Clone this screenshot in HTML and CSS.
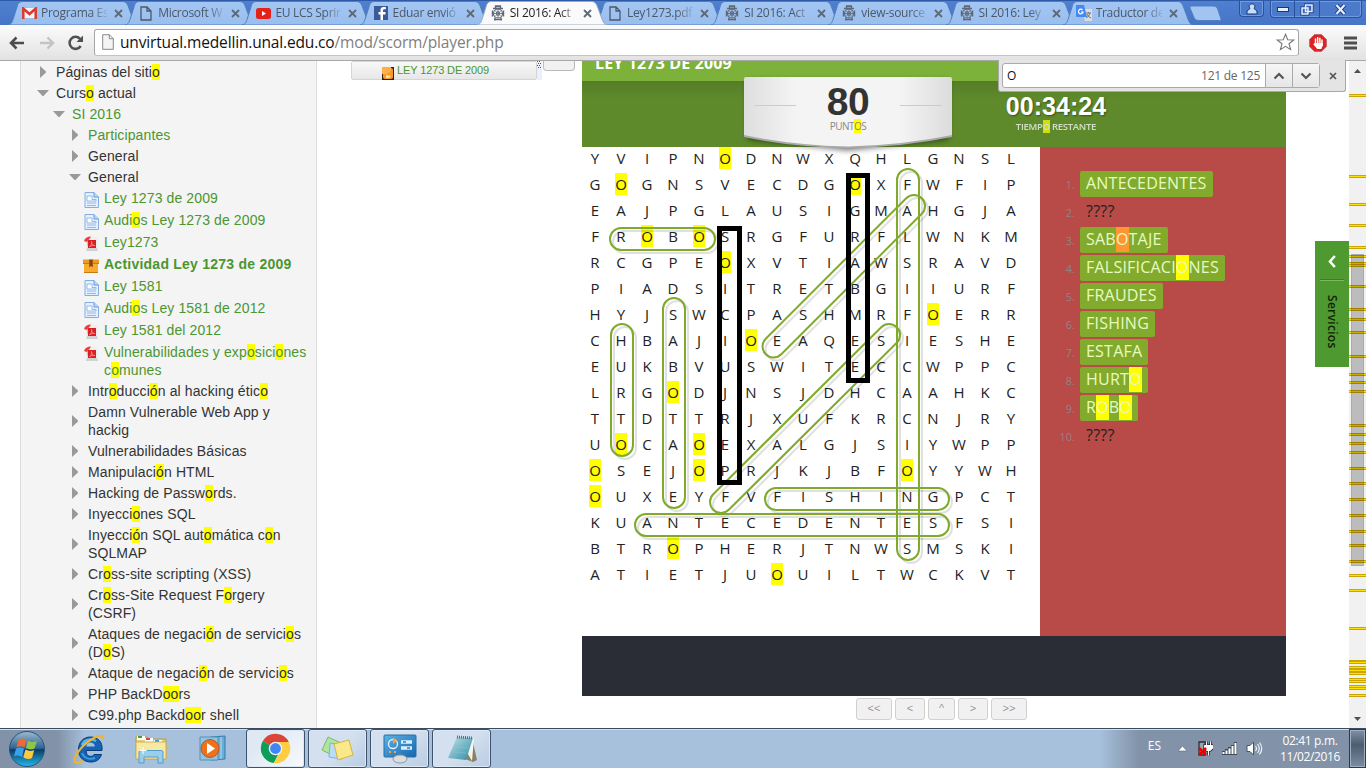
FILE: index.html
```html
<!DOCTYPE html>
<html lang="es">
<head>
<meta charset="utf-8">
<title>SI 2016: Actividad Ley 1273 de 2009</title>
<link rel="stylesheet" href="styles.css">
</head>
<body>
<svg class="defs" width="0" height="0">
  <defs>
    <linearGradient id="tabg" x1="0" y1="0" x2="0" y2="1"><stop offset="0" stop-color="#a3c6f3"/><stop offset="1" stop-color="#99beef"/></linearGradient>
    <linearGradient id="orb" x1="0" y1="0" x2="0" y2="1"><stop offset="0" stop-color="#9db9cf"/><stop offset=".48" stop-color="#2d6590"/><stop offset=".52" stop-color="#0b3a66"/><stop offset="1" stop-color="#25b8ea"/></linearGradient>
    <linearGradient id="paper" x1="0" y1="0" x2="1" y2="0"><stop offset="0" stop-color="#dedede"/><stop offset=".25" stop-color="#f4f4f4"/><stop offset=".75" stop-color="#f4f4f4"/><stop offset="1" stop-color="#dcdcdc"/></linearGradient>
    <linearGradient id="pad" x1="0" y1="0" x2="1" y2="1"><stop offset="0" stop-color="#bfe3ea"/><stop offset="1" stop-color="#2f8ba3"/></linearGradient>
    <linearGradient id="panel" x1="0" y1="0" x2="1" y2="1"><stop offset="0" stop-color="#5db2e6"/><stop offset="1" stop-color="#1767ad"/></linearGradient>
    <filter id="soft" x="-20%" y="-30%" width="140%" height="180%"><feGaussianBlur stdDeviation="3"/></filter>
    <symbol id="tabshape" viewBox="0 0 134 24"><path d="M0 24C4 23 4 21 5.500 17L9 6C10 2 11.500.5 15 .5H114C117.500.5 119 2 120.500 6L125 18C126.500 22 127.500 24 131 24Z"/></symbol>
    <symbol id="file" viewBox="0 0 12 15"><path d="M1 1h6l4 4v9H1zM7 1v4h4" fill="none" stroke="currentColor" stroke-width="1.300"/></symbol>
    <symbol id="crest" viewBox="0 0 14 16"><g fill="none" stroke="#5f6876"><path d="M4.500 3V1h5v2M4 1.500h6" stroke-width="1.300"/><path d="M2 3.500h10M1.500 5.500v6M12.500 5.500v6M3 14.500h8M4 12.500v3M10 12.500v3" stroke-width="1.400"/><circle cx="7" cy="8.500" r="4.500" stroke-width="1.200"/><circle cx="7" cy="8.500" r="1.800"/><path d="M7 4v9M2.500 8.500h9M4 5.500l6 6M10 5.500l-6 6" stroke-width=".8"/></g></symbol>
    <symbol id="page" viewBox="0 0 15 16"><path d="M1 .5h9l4.500 4.500v10.500H1z" fill="#e2f0ff" stroke="#86ace0"/><path d="M10 .5V5h4.500" fill="#b9d5f8" stroke="#6d98d8"/><path d="M3 4h5v3.500h4v1.500H3zM3 11h9M3 13.500h9" fill="#fff" stroke="#8bb2e4" stroke-width=".9"/></symbol>
    <symbol id="pdf" viewBox="0 0 15 16"><path d="M2 1h10l2 2v12H2z" fill="#eee"/><path d="M2 15h12l-1-3H3z" fill="#d2d2d2"/><path d="M3.500 4h8.500v8H4z" fill="#d92125"/><path d="M0 5C1 2 3 .5 7 .5L5.500 3 2.500 6z" fill="#e9403b"/><path d="M5.500 10.500c2.500-1.500 2.500-4 2-5 0 2.500 1.500 4 3.500 4-2 0-3.500 0-5.500 1" fill="none" stroke="#f4a5a5" stroke-width=".7"/></symbol>
    <symbol id="box" viewBox="0 0 16 14"><path d="M0 .5h16V5H0z" fill="#e99a2b"/><path d="M1 5h14v8.500H1z" fill="#f8ac2d"/><path d="M0 4.500h16M1 13.500h14" stroke="#c97a13"/><path d="M6 .5h4v8l-2-1.500-2 1.500z" fill="#a85a11"/><path d="M8 1v6" stroke="#5b3212"/></symbol>
    <symbol id="rt" viewBox="0 0 6 12"><path d="M0 0l6 5.500v1L0 12z" fill="#999"/></symbol>
    <symbol id="dn" viewBox="0 0 12 6"><path d="M0 0h12L6.500 6h-1z" fill="#999"/></symbol>
    <pattern id="dots" width="2" height="4" patternUnits="userSpaceOnUse"><path d="M0 0h1v1H0zM1 2h1v1H1z" fill="#556"/></pattern>
  </defs>
</svg>

<header class="tabstrip">
  <div id="tabs" class="tabs"></div>
  <svg class="newtab" width="33" height="17" viewBox="0 0 33 17"><path d="M3 1h21c3 0 4 1 5 4l3 9c0 1 0 1.500-1.500 1.500H10c-3 0-4-1-5-3L1 3C.7 1.500 1.500 1 3 1z" fill="#a2c4f2" stroke="#527fbd"/></svg>
  <div class="winctl">
    <span class="wc user"><svg width="12" height="12" viewBox="0 0 12 12"><path d="M4 5.500C2 2 4 1 6 1s4 1 2 4.500l3 2.500v3H1V8z" fill="#c9ddfa" stroke="#173779"/></svg></span>
    <span class="wgroup">
      <span class="wc w1"><svg width="12" height="5" viewBox="0 0 12 5"><rect x=".5" y=".5" width="11" height="4" fill="#e5effe" stroke="#173779"/></svg></span>
      <span class="wc w2"><svg width="14" height="13" viewBox="0 0 14 13"><g fill="none" stroke="#173779" stroke-width="3"><path d="M5.500 2h6.500v6.500H5.500zM2 5h6v6H2z"/></g><g fill="#3b65b5" stroke="#e5effe" stroke-width="1.500"><path d="M5.500 2h6.500v6.500H5.500zM2 5h6v6H2z"/></g></svg></span>
      <span class="wc w3"><svg width="13" height="11" viewBox="0 0 13 11"><path d="M2.500 1l8 9M10.500 1l-8 9" stroke="#173779" stroke-width="4"/><path d="M2.500 1l8 9M10.500 1l-8 9" stroke="#e5effe" stroke-width="2.200"/></svg></span>
    </span>
  </div>
</header>

<div class="toolbar">
  <svg class="back" width="16" height="14" viewBox="0 0 16 14"><path d="M1.500 7H15M7.500 1.500L2 7l5.500 5.500" fill="none" stroke="#4c4c4c" stroke-width="2.600"/></svg>
  <svg class="fwd" width="16" height="14" viewBox="0 0 16 14"><path d="M1 7h13.500M8.500 1.500L14 7l-5.500 5.500" fill="none" stroke="#c3c3c3" stroke-width="2.400"/></svg>
  <svg class="reload" width="16" height="16" viewBox="0 0 16 16"><path d="M12.700 11A6 6 0 1 1 12 3.800" fill="none" stroke="#505050" stroke-width="2.500"/><path d="M15 .5V7H8.500z" fill="#505050"/></svg>
  <div class="omnibox">
    <svg class="ofile" width="12" height="16" viewBox="0 0 12 16"><path d="M.7.7h6.600l4 4v10.600H.7zM7.300.7v4h4" fill="#f4f4f4" stroke="#888"/></svg>
    <span class="url">unvirtual.medellin.unal.edu.co<i>/mod/scorm/player.php</i></span>
    <svg class="star" width="19" height="18" viewBox="0 0 19 18"><path d="M9.500 1.300l2.200 5.400 6 .3-4.700 3.700 1.600 5.900-5.100-3.300-5.100 3.300L6 10.700 1.300 7l6-.3z" fill="#fff" stroke="#777" stroke-width="1.100"/></svg>
  </div>
  <svg class="adblock" width="18" height="18" viewBox="0 0 18 18"><path d="M5.500.5h7l5 5v7l-5 5h-7l-5-5v-7z" fill="#dd2323" stroke="#bc6060" stroke-width=".7"/><path d="M6.500 11V5M8.700 10V3.800M10.900 10V4.300M13 11V6" stroke="#fff" stroke-width="1.500" stroke-linecap="round"/><path d="M5.800 9h8v2.500L12.300 15H8.200L4.300 10.200l.8-.7z" fill="#fff"/></svg>
  <svg class="menu" width="13" height="14" viewBox="0 0 13 14"><path d="M0 2h13M0 7h13M0 12h13" stroke="#4e4e4e" stroke-width="3"/></svg>
</div>

<main class="content">
  <nav class="tree">
    <div class="row l1"><svg class="rt"><use href="#rt"/></svg><span>Páginas del siti<mark>o</mark></span></div>
    <div class="row l1 open"><svg class="dn"><use href="#dn"/></svg><span>Curs<mark>o</mark> actual</span></div>
    <div class="row l2 open link"><svg class="dn"><use href="#dn"/></svg><span>SI 2016</span></div>
    <div class="row l3 link"><svg class="rt"><use href="#rt"/></svg><span>Participantes</span></div>
    <div class="row l3"><svg class="rt"><use href="#rt"/></svg><span>General</span></div>
    <div class="row l3 open"><svg class="dn"><use href="#dn"/></svg><span>General</span></div>
    <div class="row l4 link"><svg class="ic"><use href="#page"/></svg><span>Ley 1273 de 2009</span></div>
    <div class="row l4 link"><svg class="ic"><use href="#page"/></svg><span>Audi<mark>o</mark>s Ley 1273 de 2009</span></div>
    <div class="row l4 link"><svg class="ic"><use href="#pdf"/></svg><span>Ley1273</span></div>
    <div class="row l4 link current"><svg class="ic bx"><use href="#box"/></svg><span>Actividad Ley 1273 de 2009</span></div>
    <div class="row l4 link"><svg class="ic"><use href="#page"/></svg><span>Ley 1581</span></div>
    <div class="row l4 link"><svg class="ic"><use href="#page"/></svg><span>Audi<mark>o</mark>s Ley 1581 de 2012</span></div>
    <div class="row l4 link"><svg class="ic"><use href="#pdf"/></svg><span>Ley 1581 del 2012</span></div>
    <div class="row l4 link"><svg class="ic"><use href="#pdf"/></svg><span>Vulnerabilidades y exp<mark>o</mark>sici<mark>o</mark>nes<br>c<mark>o</mark>munes</span></div>
    <div class="row l3"><svg class="rt"><use href="#rt"/></svg><span>Intr<mark>o</mark>ducci<mark>ó</mark>n al hacking étic<mark>o</mark></span></div>
    <div class="row l3"><svg class="rt"><use href="#rt"/></svg><span>Damn Vulnerable Web App y<br>hackig</span></div>
    <div class="row l3"><svg class="rt"><use href="#rt"/></svg><span>Vulnerabilidades Básicas</span></div>
    <div class="row l3"><svg class="rt"><use href="#rt"/></svg><span>Manipulaci<mark>ó</mark>n HTML</span></div>
    <div class="row l3"><svg class="rt"><use href="#rt"/></svg><span>Hacking de Passw<mark>o</mark>rds.</span></div>
    <div class="row l3"><svg class="rt"><use href="#rt"/></svg><span>Inyecci<mark>o</mark>nes SQL</span></div>
    <div class="row l3"><svg class="rt"><use href="#rt"/></svg><span>Inyecci<mark>ó</mark>n SQL aut<mark>o</mark>mática c<mark>o</mark>n<br>SQLMAP</span></div>
    <div class="row l3"><svg class="rt"><use href="#rt"/></svg><span>Cr<mark>o</mark>ss-site scripting (XSS)</span></div>
    <div class="row l3"><svg class="rt"><use href="#rt"/></svg><span>Cr<mark>o</mark>ss-Site Request F<mark>o</mark>rgery<br>(CSRF)</span></div>
    <div class="row l3"><svg class="rt"><use href="#rt"/></svg><span>Ataques de negaci<mark>ó</mark>n de servici<mark>o</mark>s<br>(D<mark>o</mark>S)</span></div>
    <div class="row l3"><svg class="rt"><use href="#rt"/></svg><span>Ataque de negaci<mark>ó</mark>n de servici<mark>o</mark>s</span></div>
    <div class="row l3"><svg class="rt"><use href="#rt"/></svg><span>PHP BackD<mark>oo</mark>rs</span></div>
    <div class="row l3"><svg class="rt"><use href="#rt"/></svg><span>C99.php Backd<mark>oo</mark>r shell</span></div>
  </nav>

  <div class="toc">
    <div class="tocitem">
      <svg width="12" height="13" viewBox="0 0 12 13"><rect width="12" height="13" fill="#332314"/><rect x="1" y="1" width="10" height="11" rx="2" fill="#f79a25"/><path d="M0 0h9v4l-4 3H0z" fill="#ffae49"/><path d="M4 8l5 1-2 2H4z" fill="#ffe2ab"/></svg>
      <span>LEY 1273 DE 2009</span>
    </div>
    <div class="resizer"><svg width="4" height="8"><rect width="4" height="8" fill="url(#dots)"/></svg></div>
    <div class="tocbtn"></div>
  </div>

  <section class="player">
    <div class="ptitle"><span>LEY 1273 DE 2009</span></div>
    <div class="phead">
      <div class="timer"><b>00:34:24</b><span>TIEMP<mark>O</mark> RESTANTE</span></div>
    </div>
    <div class="badge">
      <svg width="240" height="96" viewBox="-16 -10 240 96">
        <path d="M4 4H204V62L104 73 4 62z" fill="#000" opacity=".6" filter="url(#soft)"/>
        <path d="M0 2Q0 0 2 0H206Q208 0 208 2V60Q160 70 104 71 48 70 0 60z" fill="#aaa"/>
        <path d="M0 2Q0 0 2 0H206Q208 0 208 2V58Q160 68 104 69.500 48 68 0 58z" fill="url(#paper)"/>
        <path d="M11 28.500h41M156 28.500h42" stroke="#ccc"/>
      </svg>
      <div class="score"><b>80</b><span>PUNT<mark>O</mark>S</span></div>
    </div>
    <div class="pbody">
      <div class="board">
        <div id="grid" class="grid"></div>
        <svg class="strokes" width="458" height="489" viewBox="582 147 458 489">
          <g id="rings" fill="none"></g>
          <g fill="none" stroke="#000" stroke-width="5"><rect x="848.5" y="175.500" width="19" height="205"/><rect x="719.5" y="228.500" width="20" height="254"/></g>
        </svg>
      </div>
      <ol class="words">
        <li><i>1.</i><span class="ok">ANTECEDENTES</span></li>
        <li><i>2.</i><span>????</span></li>
        <li><i>3.</i><span class="ok">SAB<mark class="cur">O</mark>TAJE</span></li>
        <li><i>4.</i><span class="ok">FALSIFICACI<mark>O</mark>NES</span></li>
        <li><i>5.</i><span class="ok">FRAUDES</span></li>
        <li><i>6.</i><span class="ok">FISHING</span></li>
        <li><i>7.</i><span class="ok">ESTAFA</span></li>
        <li><i>8.</i><span class="ok">HURT<mark>O</mark></span></li>
        <li><i>9.</i><span class="ok">R<mark>O</mark>B<mark>O</mark></span></li>
        <li><i>10.</i><span>????</span></li>
      </ol>
    </div>
    <div class="pfoot"></div>
    <div class="pnav"><span class="a">&lt;&lt;</span><span class="b">&lt;</span><span class="c">^</span><span class="b">&gt;</span><span class="a">&gt;&gt;</span></div>
  </section>

  <aside class="services">
    <svg width="8" height="13" viewBox="0 0 8 13"><path d="M6.800 1L2 6.500l4.800 5.500" fill="none" stroke="#fff" stroke-width="2.600"/></svg>
    <hr>
    <span>Servicios</span>
  </aside>

  <div class="scroll">
    <svg id="marks" width="17" height="667" viewBox="0 61 17 667"></svg>
  </div>
</main>

<div class="findbar">
  <div class="fbox"><span class="q">O</span><span class="n">121 de 125</span>
    <span class="fb"><svg width="12" height="8" viewBox="0 0 12 8"><path d="M1.500 6.500L6 2l4.500 4.500" fill="none" stroke="#555" stroke-width="2.200"/></svg></span>
    <span class="fb"><svg width="12" height="8" viewBox="0 0 12 8"><path d="M1.500 1.500L6 6l4.500-4.500" fill="none" stroke="#555" stroke-width="2.200"/></svg></span>
  </div>
  <svg class="fx" width="8" height="8" viewBox="0 0 8 8"><path d="M1 1l6 6M7 1L1 7" stroke="#555" stroke-width="1.700"/></svg>
</div>

<footer class="taskbar">
  <div class="slot orb"><svg width="38" height="38" viewBox="0 0 38 38"><circle cx="19" cy="19" r="17.500" fill="url(#orb)" stroke="#28527c"/><path d="M10.500 10c3-2 5-2 8 0l-2 7.500c-3-2-5-1.500-8-.5z" fill="#ee6a34"/><path d="M20 10.500c3 2 6 2 9 .5l-2.500 7.500c-3 1.500-5.500 1-8.500-.5z" fill="#8fc646"/><path d="M8 18.500c3-1.500 5-1.500 8 0L14 27c-3-2-5-2-8-.8z" fill="#3aa0e8"/><path d="M17.500 19.500c3 1.800 6 1.800 8.700.5L24 28c-3 1.500-6 1-8.700-.7z" fill="#fccb3c"/></svg></div>
  <div class="slot ie"><svg width="34" height="34" viewBox="0 0 34 34"><path d="M14.200 18.500H30C31 9.500 25.500 5 18.500 5S6.500 10 6.500 17.500 11 30 19 30c5 0 9-2.500 10.500-7.500H22c-1 1.500-2 1.800-3.500 1.800-2.700 0-4.300-1.800-4.300-5.800z" fill="#1763b3" stroke="#0b3a78"/><path d="M14.300 14.500c.5-3 2.200-4 4.200-4s4 1 4.400 4z" fill="#a7c0dc"/><path d="M10 13c2-5 8-7 14-4" fill="none" stroke="#58b6ee" stroke-width="2.500"/><path d="M10 21c2 5 7 7 13 5" fill="none" stroke="#39a0e4" stroke-width="2"/><path d="M31 7c1-3-2-5-9-1C12 11 3 22 2.500 28c-.3 4 4 3.500 9 .5" fill="none" stroke="#efb62d" stroke-width="2.200"/></svg></div>
  <div class="slot ex"><svg width="34" height="30" viewBox="0 0 34 30"><path d="M2 3h11l2 2h17v20H2z" fill="#e7cf72" stroke="#b99b3d"/><path d="M3 2h8v4H3z" fill="#fff"/><path d="M4 2h4v2H4z" fill="#4a9b38"/><path d="M11 4h8v4h-8z" fill="#fff"/><path d="M12 4h4v2h-4z" fill="#d54a2d"/><path d="M20 6h8v3h-8z" fill="#fff"/><path d="M21 6h4v2h-4z" fill="#3b9ad8"/><path d="M2 8h30v17H2z" fill="#f7e8a2" stroke="#cbb361"/><path d="M5 29V18q0-1.500 2-1.500h20q2 0 2 1.500v11h-5v-6H10v6z" fill="#97cfec" stroke="#539cc8"/><path d="M9 13v7M5.500 16.500h7" stroke="#fff" stroke-width="1"/></svg></div>
  <div class="slot wm"><svg width="30" height="27" viewBox="0 0 30 27"><path d="M12 2l14-1v23l-14 1z" fill="#68aed8" stroke="#347ba7"/><path d="M18 2v22M22 2v22" stroke="#b9dcf0"/><path d="M1 2h18v23H1z" fill="#8fc4e2" stroke="#4e94bf"/><circle cx="11" cy="13.500" r="9" fill="#ee711e" stroke="#c4550f"/><path d="M8 8v11l8-5.500z" fill="#fff"/></svg></div>
  <div class="task on"><svg width="31" height="31" viewBox="0 0 31 31"><path d="M15.500 15.500L2.800 8A14.700 14.700 0 0 1 28.800 9z" fill="#db4437"/><path d="M15.500 15.500L2.800 8a14.700 14.700 0 0 0 11 22L20 18z" fill="#0f9d58"/><path d="M15.500 9h13.300a14.700 14.700 0 0 1-15 21l7-11.500z" fill="#ffcd40"/><circle cx="15.500" cy="15.500" r="6.800" fill="#f1f1f1"/><circle cx="15.500" cy="15.500" r="5.400" fill="#4285f4"/></svg></div>
  <div class="task"><svg width="34" height="26" viewBox="0 0 34 26"><path d="M7 1l13 6-7 13L1 14z" fill="#b0e59b" stroke="#79ba6e"/><path d="M9 7l14 2-2 14-13-2z" fill="#b8ddfa" stroke="#7eb2df"/><path d="M13 8l15-4 4 15-15 5z" fill="#fbe88a" stroke="#d0b546"/></svg></div>
  <div class="task"><svg width="34" height="30" viewBox="0 0 34 30"><rect x="1" y="1" width="32" height="22" rx="1" fill="url(#panel)" stroke="#2a6fa5"/><circle cx="10" cy="10" r="4.500" fill="none" stroke="#e3f2ff" stroke-width="1.300"/><path d="M10 10V4a6 6 0 0 1 4 3z" fill="#f8a33a"/><path d="M18 8h11M18 14h11" stroke="#d9efff" stroke-width="3.500"/><path d="M20 8h3M24 14h3" stroke="#2384c9" stroke-width="1.500"/><path d="M6 18h2M11 18h2" stroke="#f5a34a" stroke-width="2"/><ellipse cx="17" cy="25" rx="7" ry="4" fill="#ddd" stroke="#8c98a4"/></svg></div>
  <div class="task last"><svg width="34" height="30" viewBox="0 0 34 30"><path d="M27 4l5 22-4 2-8-3z" fill="#8a8065"/><path d="M13 3l16 1-2 23z" fill="#f5f5ef"/><path d="M12 3l16 1-7 22L3 24z" fill="url(#pad)"/><path d="M12 3l16 1" stroke="#626e72" stroke-width="3" stroke-dasharray="1 1"/><path d="M10 13l13 1M8 18l13 1" stroke="#87c5d2" stroke-width=".5"/></svg></div>
  <div class="tray">
    <span class="es">ES</span>
    <svg class="up" width="9" height="6" viewBox="0 0 9 6"><path d="M4.500 0L9 5H0z" fill="#fff" stroke="#596a80" stroke-width=".6"/></svg>
    <svg class="pw" width="15" height="17" viewBox="0 0 15 17"><path d="M1 2h6v13H1z" fill="#99a4ae" stroke="#2b3036" stroke-width="1.300"/><path d="M6.500 5.500h8v3l-2.500 2h-3l-2.500-2zM8.500 5V1.500M12.500 5V1.500M10.500 10v5.500" fill="#fff" stroke="#2b3036" stroke-width="2.500"/><path d="M6.500 5.500h8v3l-2.500 2h-3l-2.500-2zM8.500 5V1.500M12.500 5V1.500M10.500 10v5.500" fill="#fff" stroke="#fff"/><path d="M1 8l7 7M8 8l-7 7" stroke="#e90000" stroke-width="2.500"/></svg>
    <svg class="sg" width="16" height="13" viewBox="0 0 16 13"><path d="M1.500 9v4M4.500 7v6M7.500 5v8M10.500 3v10M13.500 0v13" stroke="#3c4a5c" stroke-width="3.200"/><path d="M1.500 10v2M4.500 8.500v3.500M7.500 6.500v5.500M10.500 4v8M13.500 1v11" stroke="#fff" stroke-width="2"/></svg>
    <svg class="vo" width="17" height="15" viewBox="0 0 17 15"><path d="M1 4.500h3L7.500 1v13L4 10.500H1z" fill="#fff" stroke="#44556b"/><path d="M9.500 5q2 2.500 0 5M11.500 3q3.500 4.500 0 9M13.500 1.500q4.500 6 0 12" fill="none" stroke="#eef3f8" stroke-width="1.200"/></svg>
    <span class="clock">02:41 p.m.<br>11/02/2016</span>
    <span class="desk"></span>
  </div>
</footer>
<script src="app.js"></script>
</body>
</html>
```
FILE: app.js
```js
const SVG = (w, h, vb, inner) => `<svg class="fav" width="${w}" height="${h}" viewBox="${vb}">${inner}</svg>`;
const icons = {
  gmail: SVG(15, 12, '0 0 15 12', '<path d="M1 1h13v10H1z" fill="#f4f4f4"/><path d="M1.300 12V1.500L7.500 7l6.200-5.500V12" fill="none" stroke="#d93b30" stroke-width="2.500"/>'),
  file: SVG(12, 15, '0 0 12 15', '<use href="#file"/>'),
  yt: SVG(15, 11, '0 0 15 11', '<rect width="15" height="11" rx="2.500" fill="#e62117"/><path d="M6 3v5l4-2.500z" fill="#fff"/>'),
  fb: SVG(14, 14, '0 0 14 14', '<rect width="14" height="14" fill="#3c5a99"/><path d="M9 14V8.500h2.500V6H9V4.500q0-1.300 1.300-1.300h1.500V1H9.600Q6.500 1 6.500 4v2h-2v2.500h2V14z" fill="#fff"/>'),
  crest: SVG(14, 16, '0 0 14 16', '<use href="#crest"/>'),
  gt: SVG(16, 16, '0 0 16 16', '<path d="M6 4h10v12H9z" fill="#dcdcdc"/><path d="M0 0h8l3 12H1q-1 0-1-1z" fill="#4688f1"/><path d="M6.500 5A2.300 2.300 0 1 0 7 7H5" fill="none" stroke="#fff" stroke-width="1.200"/><path d="M10 8h5M12.500 7v1M14 8q-1 4-4 5M11 9q1 3 4 4" fill="none" stroke="#777"/>')
};
const tabs = [['gmail', 'Programa Es'], ['file', 'Microsoft W'], ['yt', 'EU LCS Sprin'], ['fb', 'Eduar envió'], ['crest', 'SI 2016: Act', 1], ['file', 'Ley1273.pdf'], ['crest', 'SI 2016: Act'], ['crest', 'view-source'], ['crest', 'SI 2016: Ley'], ['gt', 'Traductor de']];
document.getElementById('tabs').innerHTML = tabs.map(([ic, text, on]) =>
  `<div class="tab${on ? ' active' : ''}"><svg class="shape" width="134" height="24"><use href="#tabshape"/></svg><span class="favbox">${icons[ic]}</span><span class="label">${text}</span><svg class="x" width="9" height="9" viewBox="0 0 9 9"><path d="M1 1l7 7M8 1L1 8" stroke="currentColor" stroke-width="1.800"/></svg></div>`).join('');

const rows = ['YVIPNODNWXQHLGNSL', 'GOGNSVECDGOXFWFIP', 'EAJPGLAUSIGMAHGJA', 'FROBOSRGFURFLWNKM', 'RCGPEOXVTIAWSRAVD', 'PIADSITRETBGIIURF', 'HYJSWCPASHMRFOERR', 'CHBAJIOEAQESIESHE', 'EUKBVUSWITECCWPPC', 'LRGODJNSJDHCAAHKC', 'TTDTTRJXUFKRCNJRY', 'UOCAOEXALGJSIYWPP', 'OSEJOPRJKJBFOYYWH', 'OUXEYFVFISHINGPCT', 'KUANTECEDENTESFSI', 'BTROPHERJTNWSMSKI', 'ATIETJUOUILTWCKVT'];
document.getElementById('grid').innerHTML = rows.join('').split('').map(c => `<span>${c === 'O' ? '<mark>O</mark>' : c}</span>`).join('');

/* found words: start centre, end centre */
const found = [[621, 239, 704, 239], [622, 335, 622, 445], [674, 309, 674, 497], [908, 180, 908, 549], [776, 499, 938, 499], [646, 525, 938, 525], [914, 206, 773.5, 346.5], [889, 335, 721, 502]];
const ring = ([x1, y1, x2, y2], dx, color, w) => {
  const len = Math.hypot(x2 - x1, y2 - y1), a = Math.atan2(y2 - y1, x2 - x1) * 180 / Math.PI;
  return `<g transform="translate(${x1 + dx} ${y1 + dx}) rotate(${a})"><rect x="-11" y="-11" width="${len + 22}" height="22" rx="11" stroke="${color}" stroke-width="${w}"/></g>`;
};
document.getElementById('rings').innerHTML = found.map(f => ring(f, 3, 'rgba(0,0,0,.12)', 2)).join('') + found.map(f => ring(f, 0, '#7faa2b', 2)).join('');

const ys = [95, 176, 204, 225, 247, 256, 263, 265, 286, 309, 319, 332, 356, 374, 382, 391, 425, 434, 443, 452, 468, 483, 499, 515, 531, 545, 561, 575, 590, 628, 661, 662, 667, 670, 673, 679, 681, 686, 688, 695];
document.getElementById('marks').innerHTML =
  ys.map(y => `<rect y="${y - 1}" width="17" height="3" fill="#cba600"/><rect y="${y}" width="17" height="1" fill="#ffe100"/>`).join('') +
  '<rect x="2.500" y="254.500" width="12" height="311" fill="rgba(0,0,0,.22)" stroke="rgba(0,0,0,.2)"/>' +
  '<path d="M5 73l3.500-4 3.500 4zM5 717h7l-3.500 4z" fill="#505050"/>';
```
FILE: styles.css
```css
* { box-sizing: border-box; }
body { margin: 0; width: 1366px; height: 768px; overflow: hidden; position: relative; display: flex; flex-direction: column; background: #fff; font-family: "Liberation Sans", Arial, sans-serif; }
svg { display: block; flex: none; }
.defs { position: absolute; }
mark { background: #ff0; color: inherit; }

/* browser frame */
.tabstrip { height: 25px; flex: none; display: flex; background: linear-gradient(#4f7fcf, #4675c8); padding-left: 8px; border-top: 1px solid #2d59a6; }
.tabs { display: flex; width: 1179px; }
.tab { position: relative; width: 117.2px; flex: none; display: flex; align-items: center; height: 24px; color: #4d5866; }
.shape { position: absolute; left: 0; top: 0; fill: url(#tabg); stroke: #517eb9; }
.active { z-index: 2; color: #222; }
.active .shape { fill: #fafafa; stroke: #9aa9bd; }
.favbox { position: relative; width: 16px; margin-left: 13px; display: flex; justify-content: center; }
.tab .label { position: relative; margin-left: 4px; width: 66px; height: 20px; overflow: hidden; white-space: nowrap; font: 12px/20px "Open Sans", sans-serif; letter-spacing: -.3px; -webkit-mask-image: linear-gradient(90deg, #000 76%, rgba(0,0,0,.15)); mask-image: linear-gradient(90deg, #000 76%, rgba(0,0,0,.15)); }
.tab .x { position: relative; margin-left: 7px; color: #5e6977; }
.newtab { margin: 4px 0 0 2px; }
.winctl { display: flex; margin-left: 17px; height: 17px; }
.wc { display: flex; align-items: center; justify-content: center; height: 16px; }
.user { width: 25px; border: 1px solid #2a509b; border-top: 0; border-radius: 0 0 4px 4px; background: #4c7acb; box-shadow: inset 0 0 0 1px #719ae0; }
.wgroup { display: flex; margin-left: 6px; border: 1px solid #2a509b; border-top: 0; border-radius: 0 0 4px 4px; background: #4c7acb; box-shadow: inset 0 0 0 1px #719ae0; }
.w1 { width: 24px; border-right: 1px solid #2a509b; }
.w2 { width: 25px; border-right: 1px solid #2a509b; }
.w3 { width: 41px; }

.toolbar { height: 36px; flex: none; display: flex; align-items: center; background: linear-gradient(#fbfbfb, #e2e2e2); border-bottom: 1px solid #a9a7a8; }
.back { margin-left: 9px; }
.fwd { margin-left: 14px; }
.reload { margin-left: 13px; }
.omnibox { margin-left: 10px; width: 1205px; height: 27px; display: flex; align-items: center; border: 1px solid #a7a7a7; border-bottom-color: #c4c4c4; border-radius: 3px; background: #fff; margin-top: -1px; }
.ofile { margin-left: 7px; }
.url { margin-left: 6px; font: 15.500px/24px "Open Sans", sans-serif; letter-spacing: -.16px; color: #111; width: 1156px; flex: none; white-space: nowrap; }
.url i { font-style: normal; color: #808080; }
.adblock { margin-left: 10px; }
.menu { margin-left: 17px; }

.content { position: relative; height: 667px; flex: none; display: flex; overflow: hidden; }

/* course tree */
.tree { margin-left: 20px; width: 297px; flex: none; height: 667px; padding-top: 2px; background: #f4f4f4; border: solid #ddd; border-width: 0 1px; font-size: 14px; line-height: 18px; letter-spacing: .115px; color: #333; overflow: hidden; white-space: nowrap; }
.row { display: flex; align-items: center; padding-bottom: 3px; }
.link { color: #4c9630; }
.rt { width: 6px; height: 12px; margin-right: 10px; }
.dn { width: 12px; height: 6px; margin-right: 7px; }
.l1 { padding-left: 19px; } .l1.open { padding-left: 16px; }
.l2.open { padding-left: 32px; }
.l3 { padding-left: 51px; } .l3.open { padding-left: 48px; }
.l4 { padding-left: 62px; align-items: flex-start; min-height: 22px; }
.ic { width: 15px; height: 16px; margin: 3px 5px 0 1px; }
.l4 .ic { margin-bottom: -2px; }
.l4 .bx { width: 16px; height: 14px; margin: 4px 5px 0 0; }
.current { font-weight: bold; letter-spacing: .24px; }

/* SCO list */
.toc { margin-left: 34px; width: 231px; flex: none; display: flex; align-items: flex-start; }
.tocitem { width: 186px; height: 19px; display: flex; align-items: center; padding-left: 30px; font-size: 11px; letter-spacing: -.12px; color: #4c9630; border: 1px solid #d5d5d5; border-radius: 2px; background: linear-gradient(#f8f8f8, #e7e7e7); }
.tocitem svg { margin-top: 5px; }
.tocitem span { margin: -2px 0 0 3px; }
.resizer { width: 5px; height: 19px; background: #eaf1fd; }
.tocbtn { width: 32px; height: 10px; margin-left: 1px; border: 1px solid #bbb; border-top: 0; border-radius: 0 0 4px 4px; background: #f1f1f1; }

/* word search player */
.player { position: relative; width: 704px; flex: none; }
.ptitle { height: 20px; overflow: hidden; background: #7cb13a; color: #fff; font: bold 16px/20px "Open Sans", sans-serif; padding-left: 13px; }
.ptitle span { display: block; margin-top: -8px; letter-spacing: .15px; }
.phead { height: 66px; background: linear-gradient(#557d27, #5f8a2b 18px); display: flex; }
.timer { margin-left: 399px; width: 150px; text-align: center; display: flex; flex-direction: column; color: #fff; padding-top: 12px; }
.timer b { font-size: 25px; line-height: 26px; text-shadow: 1px 1px 2px rgba(0,0,0,.4); letter-spacing: .05px; }
.timer span { font: 600 9.500px/15px "Open Sans", sans-serif; opacity: .72; letter-spacing: -.28px; }
.badge { position: absolute; left: 146px; top: 6px; width: 240px; height: 96px; z-index: 3; }
.score { position: absolute; left: 16px; top: 10px; width: 208px; text-align: center; color: #333; display: flex; flex-direction: column; }
.score b { font-size: 39px; line-height: 38px; margin-top: 6px; letter-spacing: -.5px; }
.score span { font: 10px/10px "Open Sans", sans-serif; color: #888; letter-spacing: -.5px; }
.pbody { display: flex; height: 489px; }
.board { position: relative; width: 458px; background: #fff; }
.grid { display: grid; grid-template-columns: repeat(17, 26px); grid-auto-rows: 26px; margin-top: -2px; font: 15px/22px "Open Sans", sans-serif; color: #222; text-align: center; }
.grid span { padding-top: 2px; height: 26px; }
.grid mark { display: inline-block; width: 12px; height: 22px; }
.strokes { position: absolute; left: 0; top: 0; }
.words { width: 246px; margin: 0; padding: 23px 0 0 15px; list-style: none; background: #b84a47; font: 16px/26px "Open Sans", sans-serif; }
.words li { display: flex; height: 28px; align-items: center; }
.words i { width: 20px; text-align: right; font: 11px/26px "Open Sans", sans-serif; color: #8e8585; margin: 2px 5px 0 0; }
.words span { padding: 0 6px; height: 26px; line-height: 25px; border-radius: 2px; color: #222; white-space: nowrap; letter-spacing: .22px; }
.words .ok { background: #82ab2d; color: #e7fbc0; }
.words mark { display: inline-block; height: 25px; line-height: 25px; }
.words .cur { background: #ff9632; }
.pfoot { height: 60px; background: #2a2d35; }
.pnav { display: flex; gap: 3px; padding: 2px 0 0 274px; }
.pnav span { height: 22px; border: 1px solid #d0d0d0; border-radius: 3px; background: #f1f1f1; color: #999; font: 11px/19px "Liberation Sans", sans-serif; text-align: center; }
.pnav .a { width: 36px; } .pnav .b { width: 30px; } .pnav .c { width: 27px; }

.services { margin: 180px 0 0 29px; width: 34px; height: 126px; flex: none; background: #4f9a30; display: flex; flex-direction: column; align-items: center; padding-top: 14px; }
.services hr { width: 24px; height: 2px; margin: 11px 0 14px; border: solid #3c7f20; border-width: 1px 0 0; background: #7bb763; }
.services span { writing-mode: vertical-rl; font: 600 12px/18px "Open Sans", sans-serif; letter-spacing: .3px; color: #102208; }
.scroll { width: 17px; flex: none; background: #f1f1f1; }

.findbar { position: absolute; left: 998px; top: 60px; width: 348px; height: 32px; background: #e4e4e4; border: 1px solid #a9a7a8; border-top: 0; border-radius: 0 0 3px 3px; display: flex; align-items: center; padding-left: 3px; z-index: 9; }
.fbox { display: flex; width: 318px; height: 25px; border: 1px solid #aaa; border-radius: 3px; background: #fff; font: 12px/23px "Open Sans", sans-serif; }
.q { padding-left: 4px; width: 194px; color: #111; }
.n { width: 68px; text-align: right; padding-right: 5px; color: #666; white-space: nowrap; letter-spacing: -.25px; flex: none; }
.fb { width: 27px; display: flex; align-items: center; justify-content: center; border-left: 1px solid #aaa; background: linear-gradient(#f6f6f6, #e6e6e6); }
.fx { margin-left: 9px; }

/* desktop taskbar */
.taskbar { height: 40px; flex: none; display: flex; align-items: flex-start; border-top: 1px solid #3b4b60; box-shadow: inset 0 1px #d2e1f1; background: linear-gradient(90deg, #8293a9 0 58px, #a7c0dc 85px 1100px, #8293a9 1138px); }
.slot { height: 39px; display: flex; align-items: center; justify-content: center; }
.orb { width: 54px; } .ie { width: 70px; } .ex { width: 54px; } .wm { width: 68px; padding-left: 3px; }
.task { width: 59px; height: 39px; margin-right: 3px; border: 1px solid #3f526b; border-radius: 3px; box-shadow: inset 0 0 0 1px #dce8f5; background: linear-gradient(135deg, #d4e0ef 50%, #b8cce3); display: flex; align-items: center; justify-content: center; }
.task.on { background: linear-gradient(135deg, #e0e9f3 30%, #f8fafd); }
.tray { flex: 1; display: flex; align-items: center; height: 39px; justify-content: flex-end; color: #fff; font: 12px/16px "Open Sans", sans-serif; }
.es { margin: -6px 17px 0 0; font-size: 12px; }
.up { margin-right: 11px; } .pw { margin-right: 9px; } .sg { margin-right: 8px; } .vo { margin-right: 16px; }
.clock { text-align: center; width: 62px; letter-spacing: -.35px; white-space: nowrap; }
.desk { margin-left: 8px; width: 17px; height: 39px; border: 1px solid #2f3a49; box-shadow: inset 0 0 0 1px #9faec0; background: linear-gradient(#8190a3, #4e5c70 40%, #7b8ca2); }
```
